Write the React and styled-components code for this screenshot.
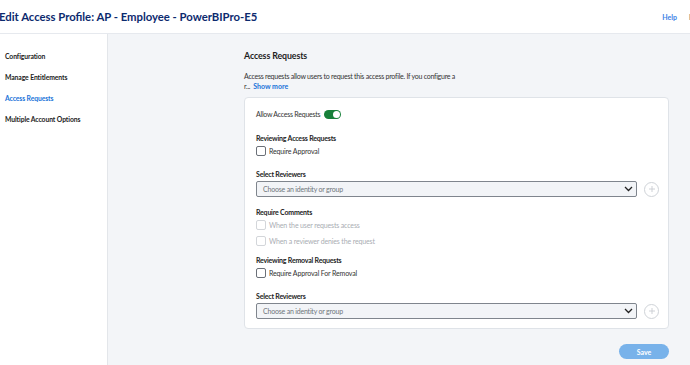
import React from "react";
import styled, { createGlobalStyle } from "styled-components";

const GlobalStyle = createGlobalStyle`
  body {
    margin: 0;
    font-family: Lato, "Open Sans", sans-serif;
    background: #fff;
    overflow: hidden;
  }
  * { box-sizing: border-box; }
`;

const Page = styled.div`
  width: 690px;
  height: 365px;
  display: flex;
  flex-direction: column;
  overflow: hidden;
`;

const Header = styled.header`
  height: 34px;
  flex-shrink: 0;
  display: flex;
  align-items: center;
  justify-content: space-between;
  border-bottom: 1px solid #e6e9ee;
  white-space: nowrap;
`;

const Title = styled.h1`
  margin: 0 0 0 -1px;
  font-size: 11.3px;
  font-weight: 700;
  color: #0c2a6e;
`;

const HeaderLinks = styled.div`
  display: flex;
  gap: 12px;
  margin-right: -3px;
  font-size: 7px;
  font-weight: 700;
`;

const HeaderLink = styled.span`
  color: ${({ $muted }) => ($muted ? "#777" : "#3b82e6")};
`;

const Body = styled.div`
  flex: 1;
  display: flex;
  min-height: 0;
`;

const Sidebar = styled.nav`
  width: 108px;
  flex-shrink: 0;
  border-right: 1px solid #e3e6ea;
  padding: 18px 0 0 5px;
  display: flex;
  flex-direction: column;
  gap: 13px;
`;

const NavItem = styled.div`
  font-size: 6.8px;
  letter-spacing: -0.1px;
  line-height: 8px;
  font-weight: 700;
  white-space: nowrap;
  color: ${({ $active }) => ($active ? "#1a73d9" : "#222")};
`;

const Main = styled.main`
  flex: 1;
  background: #f3f5f8;
  padding: 16px 0 0 136px;
`;

const Column = styled.div`
  width: 425px;
  display: flex;
  flex-direction: column;
`;

const SectionTitle = styled.h2`
  margin: 0;
  font-size: 8.8px;
  letter-spacing: -0.1px;
  line-height: 12px;
  font-weight: 700;
  color: #1d1d1d;
`;

const Description = styled.div`
  margin-top: 9px;
  font-size: 7px;
  letter-spacing: -0.25px;
  line-height: 10px;
  color: #333;
  white-space: nowrap;
`;

const DescLine = styled.div`
  display: flex;
  gap: 3px;
`;

const ShowMore = styled.span`
  color: #1a73d9;
  font-weight: 700;
  letter-spacing: 0;
`;

const Card = styled.section`
  margin-top: 6px;
  background: #fff;
  border: 1px solid #dfe3e8;
  border-radius: 4px;
  padding: 11px 9px 9px 11px;
  display: flex;
  flex-direction: column;
`;

const ToggleRow = styled.div`
  display: flex;
  align-items: center;
  gap: 4px;
  height: 10px;
  font-size: 7px;
  letter-spacing: -0.25px;
  color: #333;
  margin-bottom: 14px;
`;

const Toggle = styled.span`
  width: 17px;
  height: 9px;
  border-radius: 5px;
  background: #17803a;
  position: relative;
  &::after {
    content: "";
    position: absolute;
    right: 1px;
    top: 1px;
    width: 7px;
    height: 7px;
    border-radius: 50%;
    background: #fff;
  }
`;

const GroupLabel = styled.div`
  font-size: 7px;
  letter-spacing: -0.2px;
  line-height: 10px;
  font-weight: 700;
  color: #1d1d1d;
  margin-bottom: 2px;
  margin-top: ${({ $gap }) => $gap || 0}px;
`;

const CheckRow = styled.label`
  display: flex;
  align-items: center;
  gap: 3px;
  height: 12px;
  margin-bottom: ${({ $mb }) => $mb || 0}px;
  font-size: 7px;
  letter-spacing: -0.15px;
  color: ${({ $disabled }) => ($disabled ? "#a9adb3" : "#333")};
`;

const Box = styled.span`
  width: 10px;
  height: 10px;
  border-radius: 2px;
  border: 1px solid ${({ $disabled }) => ($disabled ? "#d3d6da" : "#6b7078")};
  background: #fff;
`;

const SelectRow = styled.div`
  display: flex;
  align-items: center;
  gap: 7px;
`;

const Select = styled.div`
  flex: 1;
  height: 16px;
  border: 1px solid #7f858d;
  border-radius: 2px;
  background: #f2f4f7;
  display: flex;
  align-items: center;
  justify-content: space-between;
  padding: 0 3px 0 6px;
  font-size: 7px;
  letter-spacing: -0.2px;
  color: #6f747b;
`;

const AddButton = styled.span`
  width: 15px;
  height: 15px;
  border-radius: 50%;
  border: 1px solid #cfd3d8;
  display: flex;
  align-items: center;
  justify-content: center;
`;

const Footer = styled.div`
  display: flex;
  justify-content: flex-end;
  margin-top: 15px;
`;

const SaveButton = styled.button`
  width: 50px;
  height: 15px;
  border: none;
  border-radius: 8px;
  background: #78b2ea;
  color: #fff;
  font-family: inherit;
  font-size: 7px;
  font-weight: 700;
  padding: 0;
`;

const Chevron = () => (
  <svg width="9" height="6" viewBox="0 0 9 6">
    <path d="M1 1l3.5 3.5L8 1" fill="none" stroke="#222" strokeWidth="1.3" />
  </svg>
);

const Plus = () => (
  <svg width="8" height="8" viewBox="0 0 8 8">
    <path d="M4 1v6M1 4h6" stroke="#c8ccd1" strokeWidth="0.9" />
  </svg>
);

const Reviewers = () => (
  <SelectRow>
    <Select>
      Choose an identity or group
      <Chevron />
    </Select>
    <AddButton>
      <Plus />
    </AddButton>
  </SelectRow>
);

export default function App() {
  return (
    <Page>
      <GlobalStyle />
      <Header>
        <Title>Edit Access Profile: AP - Employee - PowerBIPro-E5</Title>
        <HeaderLinks>
          <HeaderLink>Help</HeaderLink>
          <HeaderLink $muted>E</HeaderLink>
        </HeaderLinks>
      </Header>
      <Body>
        <Sidebar>
          <NavItem>Configuration</NavItem>
          <NavItem>Manage Entitlements</NavItem>
          <NavItem $active>Access Requests</NavItem>
          <NavItem>Multiple Account Options</NavItem>
        </Sidebar>
        <Main>
          <Column>
            <SectionTitle>Access Requests</SectionTitle>
            <Description>
              <DescLine>Access requests allow users to request this access profile. If you configure a</DescLine>
              <DescLine>
                <span>r...</span>
                <ShowMore>Show more</ShowMore>
              </DescLine>
            </Description>
            <Card>
              <ToggleRow>
                Allow Access Requests
                <Toggle />
              </ToggleRow>
              <GroupLabel>Reviewing Access Requests</GroupLabel>
              <CheckRow>
                <Box />
                Require Approval
              </CheckRow>
              <GroupLabel $gap={12}>Select Reviewers</GroupLabel>
              <Reviewers />
              <GroupLabel $gap={10}>Require Comments</GroupLabel>
              <CheckRow $disabled $mb={4}>
                <Box $disabled />
                When the user requests access
              </CheckRow>
              <CheckRow $disabled>
                <Box $disabled />
                When a reviewer denies the request
              </CheckRow>
              <GroupLabel $gap={8}>Reviewing Removal Requests</GroupLabel>
              <CheckRow>
                <Box />
                Require Approval For Removal
              </CheckRow>
              <GroupLabel $gap={12}>Select Reviewers</GroupLabel>
              <Reviewers />
            </Card>
            <Footer>
              <SaveButton>Save</SaveButton>
            </Footer>
          </Column>
        </Main>
      </Body>
    </Page>
  );
}
